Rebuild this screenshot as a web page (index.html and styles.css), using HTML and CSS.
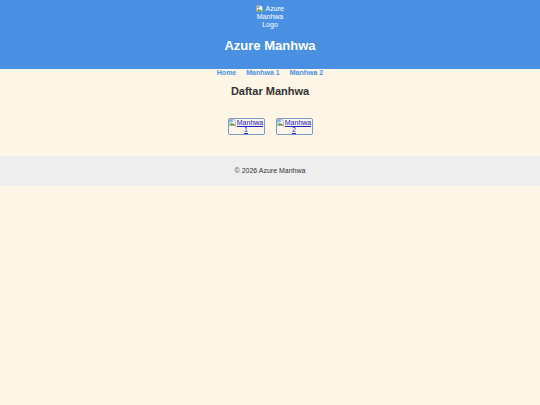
FILE: index.html
```html
<!DOCTYPE html>
<html lang="id">
<head>
    <meta charset="UTF-8">
    <meta name="viewport" content="width=device-width, initial-scale=1.0">
    <title>Azure Manhwa</title>
    <link rel="stylesheet" href="styles.css">
</head>
<body>
    <header class="site-header">
        <div class="logo">
            <svg class="broken-icon" viewBox="0 0 8 8" width="7" height="7"><path d="M0.5 0.5h5l2 2v5h-7z" fill="#f4f4f4" stroke="#9a9a9a" stroke-width="0.8"/><path d="M1 7l2-3 1.5 2 1-1 1.5 2z" fill="#5aa02c"/><rect x="1.2" y="1.2" width="3" height="2.2" fill="#7fb2e5"/></svg>
            Azure Manhwa Logo
        </div>
        <h1>Azure Manhwa</h1>
    </header>

    <nav class="main-nav">
        <a href="#">Home</a>
        <a href="#">Manhwa 1</a>
        <a href="#">Manhwa 2</a>
    </nav>

    <main>
        <h2>Daftar Manhwa</h2>
        <div class="manhwa-list">
            <div class="manhwa-card">
                <a href="#"><svg class="broken-icon" viewBox="0 0 8 8" width="7" height="7"><path d="M0.5 0.5h5l2 2v5h-7z" fill="#f4f4f4" stroke="#9a9a9a" stroke-width="0.8"/><path d="M1 7l2-3 1.5 2 1-1 1.5 2z" fill="#5aa02c"/><rect x="1.2" y="1.2" width="3" height="2.2" fill="#7fb2e5"/></svg>Manhwa 1</a>
            </div>
            <div class="manhwa-card">
                <a href="#"><svg class="broken-icon" viewBox="0 0 8 8" width="7" height="7"><path d="M0.5 0.5h5l2 2v5h-7z" fill="#f4f4f4" stroke="#9a9a9a" stroke-width="0.8"/><path d="M1 7l2-3 1.5 2 1-1 1.5 2z" fill="#5aa02c"/><rect x="1.2" y="1.2" width="3" height="2.2" fill="#7fb2e5"/></svg>Manhwa 2</a>
            </div>
        </div>
    </main>

    <footer class="site-footer">
        <p>&copy; 2026 Azure Manhwa</p>
    </footer>
</body>
</html>
```

FILE: styles.css
```css
body {
    font-family: 'Liberation Sans', Arial, sans-serif;
    background-color: #fdf5e6;
    margin: 0;
    padding: 0;
}
.site-header {
    background-color: #4a90e2;
    color: white;
    text-align: center;
    padding: 5px 0 16px;
}
.logo {
    width: 34px;
    margin: 0 auto;
    font-size: 7px;
    line-height: 8px;
}
.broken-icon {
    vertical-align: -1px;
    margin-right: 1px;
}
.site-header h1 {
    font-size: 13px;
    line-height: 15px;
    margin: 9px 0 0;
}
.main-nav {
    display: flex;
    justify-content: center;
    gap: 10px;
    padding: 0;
    line-height: 8px;
}
.main-nav a {
    color: #4a90e2;
    text-decoration: none;
    font-size: 7px;
    font-weight: bold;
}
main {
    text-align: center;
}
main h2 {
    font-size: 11px;
    line-height: 13px;
    color: #333;
    margin: 8px 0 20px;
}
.manhwa-list {
    display: flex;
    justify-content: center;
    gap: 11px;
    padding-bottom: 21px;
}
.manhwa-card {
    border: 1px solid #7a9cc8;
    border-radius: 2px;
    width: 35px;
    font-size: 7px;
    line-height: 7px;
    padding: 0 0 1px;
}
.manhwa-card a {
    color: #2222cc;
}
.site-footer {
    background-color: #eee;
    text-align: center;
    padding: 11px 0;
}
.site-footer p {
    margin: 0;
    font-size: 7px;
    line-height: 8px;
    color: #333;
}
```
